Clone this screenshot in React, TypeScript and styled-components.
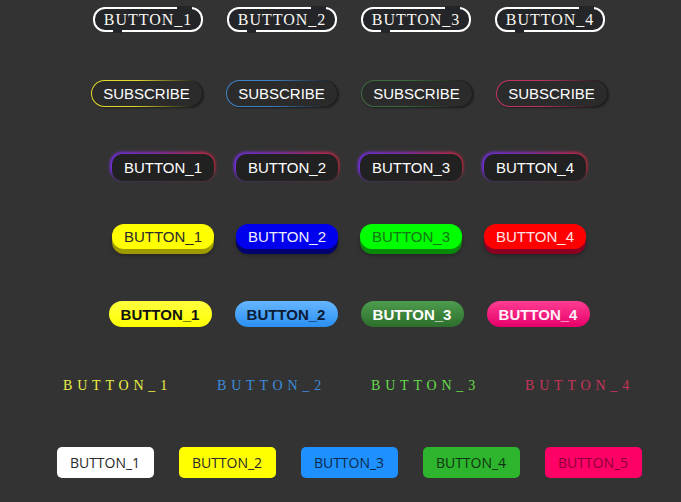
import React from 'react';
import styled, { createGlobalStyle } from 'styled-components';

const Global = createGlobalStyle`
  html, body { margin: 0; padding: 0; background: #333333; }
  body { width: 681px; height: 502px; overflow: hidden; }
  button { cursor: pointer; }
`;

const Page = styled.main`
  display: flex;
  flex-direction: column;
  box-sizing: border-box;
  width: 681px;
  height: 502px;
  padding: 7px 0 0 17px;
`;

const Row = styled.div<{ $gap: number; $mt: number; $h: number }>`
  display: flex;
  justify-content: center;
  align-items: center;
  gap: ${(p) => p.$gap}px;
  margin-top: ${(p) => p.$mt}px;
  height: ${(p) => p.$h}px;
`;

/* Row 1: white outline with cut border */
const CutBtn = styled.button`
  position: relative;
  box-sizing: border-box;
  width: 110px;
  height: 25px;
  padding: 0;
  border: 2px solid #ffffff;
  border-radius: 12px;
  background: #232529;
  color: #fbf8f2;
  font: 16px 'Liberation Serif', 'Times New Roman', serif;
  letter-spacing: 1px;
  line-height: 1;
  &::before {
    content: '';
    position: absolute;
    top: -3px;
    right: 9px;
    width: 15px;
    height: 5px;
    background: #232529;
  }
  &::after {
    content: '';
    position: absolute;
    bottom: -3px;
    left: 18px;
    width: 9px;
    height: 5px;
    background: #232529;
  }
`;

/* Row 2: subscribe with gradient hairline */
const SubBtn = styled.button<{ $c: string }>`
  box-sizing: border-box;
  width: 112px;
  height: 27px;
  padding: 0;
  border-radius: 14px;
  border: 1px solid transparent;
  background: linear-gradient(#2b2b2b, #2b2b2b) padding-box,
    linear-gradient(100deg, ${(p) => p.$c} 0%, ${(p) => p.$c} 40%, #1c1c1c 92%) border-box;
  box-shadow: 1px 1px 2px rgba(0, 0, 0, 0.45);
  color: #ffffff;
  font: 15px 'Liberation Sans', Arial, sans-serif;
`;

/* Row 3: dark glow */
const GlowBtn = styled.button`
  position: relative;
  isolation: isolate;
  box-sizing: border-box;
  width: 102px;
  height: 27px;
  padding: 0;
  border: none;
  border-radius: 10px;
  background: transparent;
  color: #ffffff;
  font: 15px 'Liberation Sans', Arial, sans-serif;
  &::before {
    content: '';
    position: absolute;
    z-index: -2;
    inset: -2px -1px 1px -2px;
    border-radius: 12px;
    background: linear-gradient(90deg, #7a2ef0 0%, #8a2cb0 45%, #d0263c 100%);
    filter: blur(1.5px);
  }
  &::after {
    content: '';
    position: absolute;
    z-index: -1;
    inset: 0;
    border-radius: 10px;
    background: #212121;
  }
`;

/* Row 4: 3D flat pills */
const PopBtn = styled.button<{ $bg: string; $shade: string; $fg: string }>`
  box-sizing: border-box;
  width: 102px;
  height: 25px;
  padding: 0;
  border: none;
  border-radius: 12px;
  background: ${(p) => p.$bg};
  color: ${(p) => p.$fg};
  box-shadow: 0 5px 0 ${(p) => p.$shade}, 0 6px 4px rgba(0, 0, 0, 0.35);
  font: 15px 'Liberation Sans', Arial, sans-serif;
`;

/* Row 5: glossy pills */
const GlossBtn = styled.button<{ $top: string; $bottom: string; $fg: string }>`
  box-sizing: border-box;
  width: 103px;
  height: 26px;
  padding: 0;
  border: none;
  border-radius: 13px;
  background: linear-gradient(180deg, ${(p) => p.$top} 0%, ${(p) => p.$bottom} 100%);
  color: ${(p) => p.$fg};
  font: bold 15px 'Liberation Sans', Arial, sans-serif;
`;

/* Row 6: spaced text links */
const SpacedText = styled.a<{ $c: string }>`
  display: block;
  width: 110px;
  color: ${(p) => p.$c};
  font: 14px 'Liberation Serif', 'Times New Roman', serif;
  letter-spacing: 4.8px;
  white-space: nowrap;
  text-decoration: none;
`;

/* Row 7: rounded rectangles */
const BoxBtn = styled.button<{ $bg: string; $fg: string }>`
  box-sizing: border-box;
  width: 97px;
  height: 31px;
  padding: 0;
  border: none;
  border-radius: 5px;
  background: ${(p) => p.$bg};
  color: ${(p) => p.$fg};
  font: 14px 'Open Sans', 'Noto Sans', sans-serif;
`;

const subs = ['#e2d92c', '#3f82c4', '#3d6b3d', '#bb3560'];
const pops = [
  { bg: '#ffff00', shade: '#9e9a00', fg: '#2a2a2a' },
  { bg: '#0000ee', shade: '#000070', fg: '#eeeeff' },
  { bg: '#00ff00', shade: '#0a8a0a', fg: '#137a13' },
  { bg: '#ff0000', shade: '#8c0022', fg: '#ffe4e4' },
];
const gloss = [
  { top: '#ffff40', bottom: '#ffff00', fg: '#111111' },
  { top: '#66b6ff', bottom: '#2a90f2', fg: '#0d1a33' },
  { top: '#4e9c4e', bottom: '#2b6e2b', fg: '#ffffff' },
  { top: '#ff3d92', bottom: '#e6006a', fg: '#fff0f8' },
];
const spaced = ['#eeee44', '#3b8ddc', '#66dd4a', '#c8345a'];
const boxes = [
  { bg: '#ffffff', fg: '#2a2a2a' },
  { bg: '#ffff00', fg: '#2a2a2a' },
  { bg: '#1e90ff', fg: '#0c2a4a' },
  { bg: '#2db52d', fg: '#123312' },
  { bg: '#ff0066', fg: '#8a0036' },
];

export default function App() {
  return (
    <>
      <Global />
      <Page>
        <Row $gap={24} $mt={0} $h={25}>
          {[1, 2, 3, 4].map((n) => (
            <CutBtn key={n}>BUTTON_{n}</CutBtn>
          ))}
        </Row>
        <Row $gap={23} $mt={48} $h={27}>
          {subs.map((c) => (
            <SubBtn key={c} $c={c}>SUBSCRIBE</SubBtn>
          ))}
        </Row>
        <Row $gap={22} $mt={47} $h={27}>
          {[1, 2, 3, 4].map((n) => (
            <GlowBtn key={n}>BUTTON_{n}</GlowBtn>
          ))}
        </Row>
        <Row $gap={22} $mt={43} $h={25}>
          {pops.map((p, i) => (
            <PopBtn key={i} $bg={p.bg} $shade={p.shade} $fg={p.fg}>BUTTON_{i + 1}</PopBtn>
          ))}
        </Row>
        <Row $gap={23} $mt={52} $h={26}>
          {gloss.map((g, i) => (
            <GlossBtn key={i} $top={g.top} $bottom={g.bottom} $fg={g.fg}>BUTTON_{i + 1}</GlossBtn>
          ))}
        </Row>
        <Row $gap={44} $mt={49} $h={20}>
          {spaced.map((c, i) => (
            <SpacedText key={c} $c={c} href="#">BUTTON_{i + 1}</SpacedText>
          ))}
        </Row>
        <Row $gap={25} $mt={51} $h={31}>
          {boxes.map((b, i) => (
            <BoxBtn key={i} $bg={b.bg} $fg={b.fg}>BUTTON_{i + 1}</BoxBtn>
          ))}
        </Row>
      </Page>
    </>
  );
}
